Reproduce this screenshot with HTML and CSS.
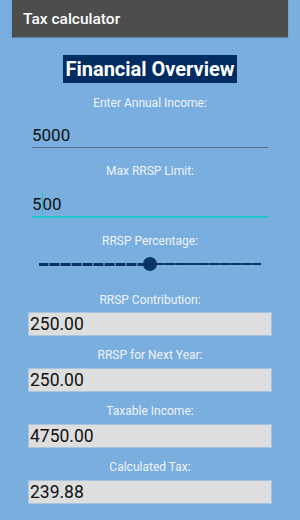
FILE: index.html
```html
<html>
    <head>
        <title>Tax calculator</title>
        <link rel="stylesheet" href="styles.css">
    </head>
    <body>

        <div class="appbar">Tax calculator</div>

        <div class="content">
            <h1 class="title"><span>Financial Overview</span></h1>

            <div class="label first">Enter Annual Income:</div>
            <div class="field">5000</div>

            <div class="label">Max RRSP Limit:</div>
            <div class="field focused">5<span class="cursor"></span>00</div>

            <div class="label">RRSP Percentage:</div>
            <div class="slider">
                <div class="track-done"></div>
                <div class="thumb"></div>
                <div class="track-left"></div>
            </div>

            <div class="label after-slider">RRSP Contribution:</div>
            <div class="result">250.00</div>

            <div class="label after-box">RRSP for Next Year:</div>
            <div class="result">250.00</div>

            <div class="label after-box">Taxable Income:</div>
            <div class="result">4750.00</div>

            <div class="label after-box">Calculated Tax:</div>
            <div class="result">239.88</div>
        </div>

    </body>
</html>
```

FILE: styles.css
```css
body {
    font-family: Roboto, "Liberation Sans", sans-serif;
    background-color: #7aaedf;
    margin: 0;
}

.appbar {
    margin: 0 12px;
    height: 37px;
    line-height: 39px;
    padding-left: 11px;
    background-color: #4d4d4d;
    color: white;
    font-size: 15.5px;
    font-weight: 500;
    box-shadow: 0 1px 1px rgba(0, 0, 0, 0.25);
}

.content {
    padding: 0 29px;
}

.title {
    margin: 18px 0 0;
    text-align: center;
    font-size: 20px;
    font-weight: bold;
    line-height: 28px;
}

.title span {
    display: inline-block;
    background-color: #012d63;
    color: white;
    padding: 0 2px;
}

.label {
    text-align: center;
    font-size: 12px;
    line-height: 16px;
    color: #eef3fa;
    margin-top: 15px;
}

.label.first {
    margin-top: 12px;
}

.label.after-slider {
    margin-top: 21px;
}

.label.after-box {
    margin-top: 12px;
}

.field {
    margin: 12px 3px 0;
    height: 24px;
    line-height: 24px;
    font-size: 17px;
    color: #111;
    border-bottom: 1px solid #5a6e8a;
}

.field.focused {
    margin-top: 13px;
    border-bottom: 2px solid #1cc7c9;
}

.cursor {
    display: inline-block;
    width: 1px;
    height: 22px;
    margin: 0 0 -5px;
    background-color: #1cc7c9;
}

.slider {
    position: relative;
    margin: 8px 10px 0;
    height: 14px;
    display: flex;
    align-items: center;
}

.track-done {
    flex: 1;
    height: 3px;
    background: repeating-linear-gradient(90deg, #0b3467 0, #0b3467 9px, #4a74a4 9px, #4a74a4 11px);
}

.track-left {
    flex: 1;
    height: 2px;
    background: repeating-linear-gradient(90deg, #0b3467 0, #0b3467 10px, #2f5787 10px, #2f5787 11px);
}

.thumb {
    width: 14px;
    height: 14px;
    border-radius: 50%;
    background-color: #0b3467;
    margin: 0 -3px;
    z-index: 1;
}

.result {
    margin-top: 5px;
    height: 22px;
    line-height: 23px;
    font-size: 17.5px;
    color: #111;
    padding-left: 1px;
    background-color: #dedede;
    box-shadow: 0 0 0 1px #a9c4e0;
}

.label.after-box + .result {
    margin-top: 6px;
}
```
